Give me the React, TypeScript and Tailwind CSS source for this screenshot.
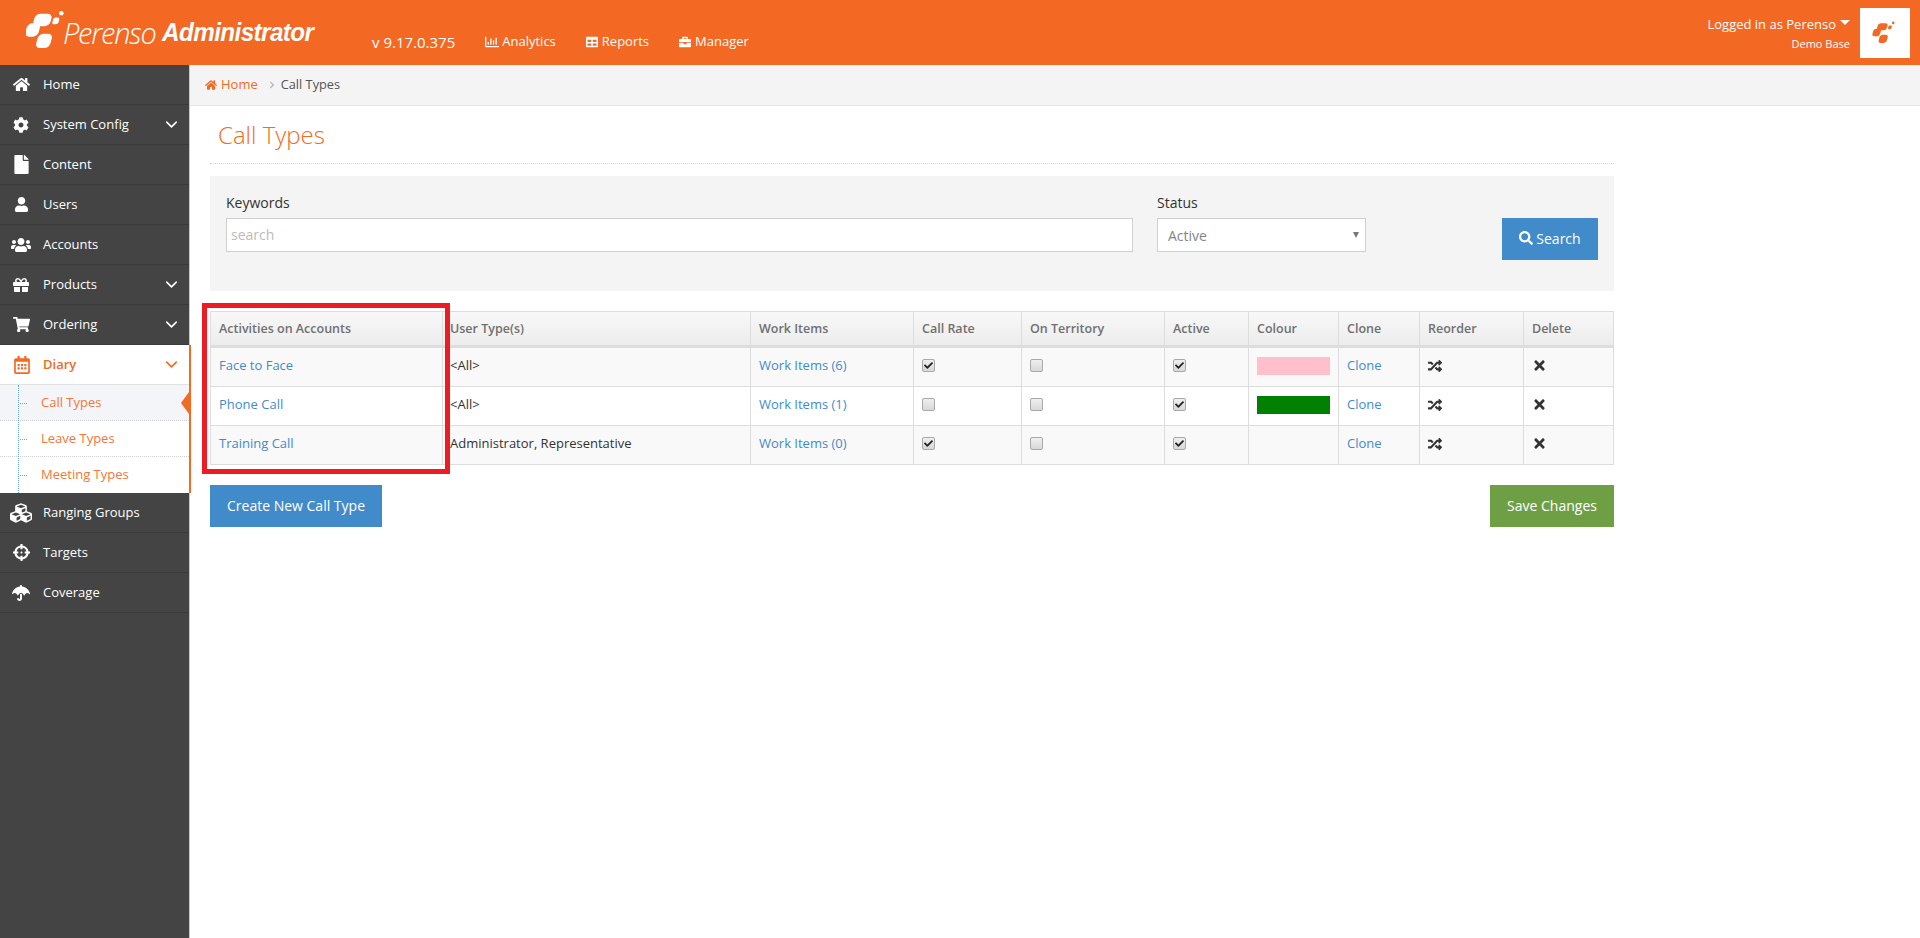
import React from 'react';
import {
  FaHome, FaCog, FaFile, FaUser, FaUsers, FaGift, FaShoppingCart, FaRegCalendarAlt, FaCubes,
  FaCrosshairs, FaUmbrella, FaChevronRight, FaRegChartBar, FaTable, FaBriefcase,
  FaSearch, FaRandom, FaTimes, FaCheck,
} from 'react-icons/fa';
import { FiChevronDown } from 'react-icons/fi';

const LogoMark = ({ className }: { className: string }) => (
  <svg viewBox="0 0 46 42" className={className} fill="currentColor">
    <g transform="skewX(-15)">
      <rect x="11" y="4" width="18" height="13" rx="5" />
      <rect x="5.5" y="14" width="14" height="14" rx="5" />
      <rect x="20" y="25" width="15" height="15" rx="5" />
      <rect x="31" y="8" width="6.5" height="7" rx="2.5" />
    </g>
    <circle cx="37" cy="3.5" r="2.4" />
  </svg>
);

const navTop = [
  { label: 'Home', icon: FaHome, size: 'text-[17px]' },
  { label: 'System Config', icon: FaCog, size: 'text-[16px]', arrow: true },
  { label: 'Content', icon: FaFile, size: 'text-[19px]' },
  { label: 'Users', icon: FaUser, size: 'text-[15px]' },
  { label: 'Accounts', icon: FaUsers, size: 'text-[20px]' },
  { label: 'Products', icon: FaGift, size: 'text-[16px]', arrow: true },
  { label: 'Ordering', icon: FaShoppingCart, size: 'text-[17px]', arrow: true },
];

const navBottom = [
  { label: 'Ranging Groups', icon: FaCubes, size: 'text-[22px]' },
  { label: 'Targets', icon: FaCrosshairs, size: 'text-[17px]' },
  { label: 'Coverage', icon: FaUmbrella, size: 'text-[18px]' },
];

type NavProps = { label: string; icon: React.ElementType; size: string; arrow?: boolean };

const NavItem = ({ label, icon: Icon, size, arrow }: NavProps) => (
  <div className="flex h-10 items-center border-b border-[#3a3a3a] text-[13px] text-white">
    <div className="flex w-[43px] shrink-0 justify-center pr-[1px]">
      <Icon className={size} />
    </div>
    <span className="flex-1">{label}</span>
    {arrow && <FiChevronDown className="mr-[8px] text-[19px]" />}
  </div>
);

const Sidebar = () => (
  <aside className="w-[190px] shrink-0 border-r border-[#c8c8c8] bg-[#444444]">
    {navTop.map((item) => (
      <NavItem key={item.label} {...item} />
    ))}
    <div className="-mr-[2px] border-r-2 border-[#f36a24] bg-white">
      <div className="flex h-[40px] items-center border-b border-[#e2e2e2] text-[13px] font-semibold text-[#f36a24]">
        <div className="flex w-[43px] shrink-0 justify-center">
          <FaRegCalendarAlt className="text-[18px]" />
        </div>
        <span className="flex-1">Diary</span>
        <FiChevronDown className="mr-[8px] text-[19px]" />
      </div>
      <div className="relative">
        {['Call Types', 'Leave Types', 'Meeting Types'].map((label, i) => (
          <div
            key={label}
            className={`relative flex h-[36px] items-center pl-[41px] text-[13px] text-[#f3763a] ${i === 0 ? 'bg-[#f4f5f9]' : ''} ${i < 2 ? 'border-b border-dotted border-[#d0d0d0]' : ''}`}
          >
            <div className="absolute left-[20px] top-1/2 w-[7px] border-t border-dotted border-[#6aa7d6]" />
            {label}
            {i === 0 && (
              <div className="absolute right-0 top-[7px] h-0 w-0 border-y-[11px] border-r-[8px] border-y-transparent border-r-[#f36a24]" />
            )}
          </div>
        ))}
        <div className="absolute bottom-0 left-[18px] top-0 border-l border-dotted border-[#6aa7d6]" />
      </div>
    </div>
    {navBottom.map((item) => (
      <NavItem key={item.label} {...item} />
    ))}
  </aside>
);

const Header = () => (
  <header className="flex h-[65px] items-center bg-[#f36823] text-white">
    <div className="flex w-[372px] shrink-0 items-center pl-[26px]">
      <LogoMark className="mb-[6px] h-[40px] w-[44px] shrink-0" />
      <span className="ml-[-7px] text-[29px] font-light italic leading-none tracking-[-1.2px]">Perenso</span>
      <span className="ml-[6px] origin-left scale-x-[0.97] text-[25px] font-bold italic leading-none tracking-[-0.6px] [font-family:'Liberation_Sans',sans-serif]">
        Administrator
      </span>
    </div>
    <span className="mt-[19px] text-[15px]">v 9.17.0.375</span>
    <div className="ml-[30px] mt-[19px] flex items-center gap-[30px] text-[13px]">
      <span className="flex items-center gap-[3px]"><FaRegChartBar className="text-[14px]" />Analytics</span>
      <span className="flex items-center gap-[4px]"><FaTable className="text-[12px]" />Reports</span>
      <span className="flex items-center gap-[4px]"><FaBriefcase className="text-[12px]" />Manager</span>
    </div>
    <div className="ml-auto mr-[10px] flex items-center gap-[10px]">
      <div className="text-right">
        <div className="flex items-center justify-end gap-[4px] text-[13px] leading-[18px]">
          Logged in as Perenso
          <span className="mb-[3px] h-0 w-0 border-x-[5px] border-t-[5px] border-x-transparent border-t-white" />
        </div>
        <div className="mt-[3px] text-[11px] font-medium leading-[15px]">Demo Base</div>
      </div>
      <div className="flex h-[50px] w-[50px] items-center justify-center bg-white text-[#f36823]">
        <LogoMark className="h-[23px] w-[27px]" />
      </div>
    </div>
  </header>
);

const Check = ({ on }: { on?: boolean }) => (
  <span className="flex h-[13px] w-[13px] items-center justify-center rounded-[2px] border border-[#a9a9a9] bg-gradient-to-b from-[#efefef] to-[#d8d8d8] text-[#222222]">
    {on && <FaCheck className="text-[9px]" />}
  </span>
);

const headers = ['Activities on Accounts', 'User Type(s)', 'Work Items', 'Call Rate', 'On Territory', 'Active', 'Colour', 'Clone', 'Reorder', 'Delete'];

const rows = [
  { name: 'Face to Face', users: '<All>', items: 'Work Items (6)', rate: true, active: true, colour: 'bg-[#ffc0cb]', h: 'h-[40px]' },
  { name: 'Phone Call', users: '<All>', items: 'Work Items (1)', rate: false, active: true, colour: 'bg-[#008000]', h: 'h-[39px]' },
  { name: 'Training Call', users: 'Administrator, Representative', items: 'Work Items (0)', rate: true, active: true, colour: '', h: 'h-[39px]' },
];

const CallTable = () => (
  <div className="relative">
    <table className="w-[1403px] table-fixed border-collapse text-[13px] text-[#333333]">
      <colgroup>
        <col className="w-[232px]" />
        <col className="w-[308px]" />
        <col className="w-[163px]" />
        <col className="w-[108px]" />
        <col className="w-[143px]" />
        <col className="w-[84px]" />
        <col className="w-[90px]" />
        <col className="w-[81px]" />
        <col className="w-[104px]" />
        <col className="w-[90px]" />
      </colgroup>
      <thead>
        <tr className="h-[35px] bg-gradient-to-b from-[#f8f8f8] to-[#ececec]">
          {headers.map((h, i) => (
            <th key={h} className={`border border-b-[3px] border-[#dddddd] pr-[8px] pt-[2px] text-left text-[12.5px] font-semibold text-[#707070] ${i === 1 ? 'pl-[7px]' : 'pl-[8px]'}`}>
              {h}
            </th>
          ))}
        </tr>
      </thead>
      <tbody>
        {rows.map((row, i) => (
          <tr key={row.name} className={`${row.h} ${i % 2 === 0 ? 'bg-[#f9f9f9]' : 'bg-white'}`}>
            <td className="border border-[#dddddd] px-[8px] pb-[3px] text-[#428bca]">{row.name}</td>
            <td className="border border-[#dddddd] pb-[3px] pl-[7px] pr-[8px]">{row.users}</td>
            <td className="border border-[#dddddd] px-[8px] pb-[3px] text-[#428bca]">{row.items}</td>
            <td className="border border-[#dddddd] px-[8px] pb-[3px]"><Check on={row.rate} /></td>
            <td className="border border-[#dddddd] px-[8px] pb-[3px]"><Check /></td>
            <td className="border border-[#dddddd] px-[8px] pb-[3px]"><Check on={row.active} /></td>
            <td className="border border-[#dddddd] px-[8px] pb-[3px]">
              {row.colour && <div className={`h-[18px] w-[73px] ${row.colour}`} />}
            </td>
            <td className="border border-[#dddddd] px-[8px] pb-[3px] text-[#428bca]">Clone</td>
            <td className="border border-[#dddddd] px-[8px] pb-[3px] text-[#333333]"><FaRandom className="text-[14px]" /></td>
            <td className="border border-[#dddddd] px-[8px] pb-[3px] text-[#333333]"><FaTimes className="text-[15px]" /></td>
          </tr>
        ))}
      </tbody>
    </table>
    {/* annotation drawn over the first column */}
    <div className="pointer-events-none absolute -left-[8px] -top-[8px] h-[171px] w-[248px] border-[5px] border-[#ed1c24]" />
  </div>
);

const App = () => (
  <div className="flex min-h-screen flex-col bg-white [font-family:'Open_Sans',sans-serif]">
    <Header />
    <div className="flex flex-1">
      <Sidebar />
      <main className="min-w-0 flex-1">
        <div className="flex h-[41px] items-center border-b border-[#e5e5e5] bg-[#f4f4f4] pl-[15px] text-[13px]">
          <FaHome className="text-[12px] text-[#f36a24]" />
          <span className="ml-[4px] text-[#f36a24]">Home</span>
          <FaChevronRight className="ml-[10px] text-[8px] text-[#b5b5b5]" />
          <span className="ml-[5px] text-[12.75px] text-[#555555]">Call Types</span>
        </div>
        <div className="w-[1424px] pl-[20px]">
          <div className="flex h-[58px] items-center border-b border-dotted border-[#d5d5d5] pl-[8px]">
            <h1 className="text-[24px] font-light text-[#f36a24]">Call Types</h1>
          </div>
          <div className="mt-[12px] flex h-[115px] bg-[#f4f4f4] pl-[16px] pt-[18px]">
            <label className="w-[907px] text-[14px] text-[#333333]">
              <div className="h-[24px] leading-[17px]">Keywords</div>
              <input
                placeholder="search"
                className="h-[34px] w-full border border-[#d0d0d0] bg-white px-[4px] pb-[1px] text-[14px] placeholder:text-[#bbbbbb]"
              />
            </label>
            <label className="ml-[24px] w-[209px] text-[14px] text-[#333333]">
              <div className="h-[24px] leading-[17px]">Status</div>
              <div className="flex h-[34px] items-center justify-between border border-[#d0d0d0] bg-white pl-[10px] pr-[6px] text-[#858585]">
                Active
                <span className="h-0 w-0 border-x-[3.5px] border-t-[6px] border-x-transparent border-t-[#777777]" />
              </div>
            </label>
            <button className="ml-[136px] mt-[24px] flex h-[42px] w-[96px] items-center justify-center gap-[3px] bg-[#428bca] pb-[2px] text-[14px] text-white">
              <FaSearch className="text-[14px]" />
              Search
            </button>
          </div>
          <div className="mt-[20px]">
            <CallTable />
          </div>
          <div className="mt-[20px] flex w-[1404px] justify-between">
            <button className="h-[42px] w-[172px] bg-[#428bca] pb-[2px] text-[14px] text-white">Create New Call Type</button>
            <button className="h-[42px] w-[124px] bg-[#6f9f45] pb-[2px] text-[14px] text-white">Save Changes</button>
          </div>
        </div>
      </main>
    </div>
  </div>
);

export default App;
